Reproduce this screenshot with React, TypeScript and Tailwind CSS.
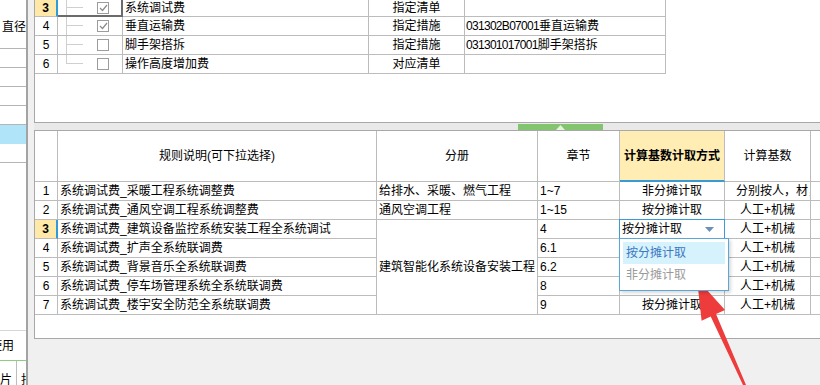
const line = 'border-[#bcbcbc]';

type TopRow = { n: string; checked: boolean; name: string; type: string; code: string; codeName: string };

const topRows: TopRow[] = [
  { n: '3', checked: true, name: '系统调试费', type: '指定清单', code: '', codeName: '' },
  { n: '4', checked: true, name: '垂直运输费', type: '指定措施', code: '031302B07001', codeName: '垂直运输费' },
  { n: '5', checked: false, name: '脚手架搭拆', type: '指定措施', code: '031301017001', codeName: '脚手架搭拆' },
  { n: '6', checked: false, name: '操作高度增加费', type: '对应清单', code: '', codeName: '' },
];

type RuleRow = { rule: string; book?: string; chapter: string; mode: string; base: string };

// rows 4 and 5 sit under the open dropdown, so their mode text is not drawn
const ruleRows: RuleRow[] = [
  { rule: '系统调试费_采暖工程系统调整费', book: '给排水、采暖、燃气工程', chapter: '1~7', mode: '非分摊计取', base: '分别按人，材，机' },
  { rule: '系统调试费_通风空调工程系统调整费', book: '通风空调工程', chapter: '1~15', mode: '按分摊计取', base: '人工+机械' },
  { rule: '系统调试费_建筑设备监控系统安装工程全系统调试', book: '建筑智能化系统设备安装工程', chapter: '4', mode: '按分摊计取', base: '人工+机械' },
  { rule: '系统调试费_扩声全系统联调费', chapter: '6.1', mode: '', base: '人工+机械' },
  { rule: '系统调试费_背景音乐全系统联调费', chapter: '6.2', mode: '', base: '人工+机械' },
  { rule: '系统调试费_停车场管理系统全系统联调费', chapter: '8', mode: '按分摊计取', base: '人工+机械' },
  { rule: '系统调试费_楼宇安全防范全系统联调费', chapter: '9', mode: '按分摊计取', base: '人工+机械' },
];

function Check() {
  return (
    <svg width="9" height="8" viewBox="0 0 9 8">
      <path d="M1 4 L3.5 6.5 L8 1" fill="none" stroke="#8a8a8a" strokeWidth="1.2" />
    </svg>
  );
}

function TopRowView({ row, i }: { row: TopRow; i: number }) {
  const first = i === 0;
  const last = i === topRows.length - 1;
  return (
    <div className={`flex ${first ? 'h-[17px]' : 'h-[19px]'}`}>
      <div
        className={`w-[23px] shrink-0 border-b ${line} flex items-center justify-center ${
          first ? 'bg-[#ffe9a8] font-bold border-r-2 border-r-[#2f9bd8]' : 'border-r'
        }`}
      >
        {row.n}
      </div>
      <div
        className={`w-[65px] shrink-0 flex items-stretch ${
          first ? 'border-r-2 border-b-2 border-[#6b6b6b]' : `border-r border-b ${line}`
        }`}
      >
        <div className="ml-[8px] w-[17px] flex flex-col">
          <div className="h-1/2 border-l border-b border-[#cfcfcf]" />
          <div className={`flex-1 ${last ? '' : 'border-l border-[#cfcfcf]'}`} />
        </div>
        <div className="ml-[14px] self-center w-[12px] h-[12px] border border-[#9c9c9c] bg-white flex items-center justify-center">
          {row.checked && <Check />}
        </div>
      </div>
      <div className={`w-[246px] shrink-0 border-r border-b ${line} flex items-center pl-[2px]`}>{row.name}</div>
      <div className={`w-[96px] shrink-0 border-r border-b ${line} flex items-center justify-center`}>{row.type}</div>
      <div className={`w-[201px] shrink-0 border-r border-b ${line} flex items-center pl-[1px] whitespace-nowrap`}>
        <span className="tracking-[-0.7px]">{row.code}</span>
        {row.codeName}
      </div>
    </div>
  );
}

function DropdownEditor({ value }: { value: string }) {
  return (
    <div className={`relative border-r border-b ${line} flex items-center pl-[2px]`}>
      <div className="absolute -inset-px border border-[#3c9ad6] pointer-events-none" />
      <span>{value}</span>
      <svg className="ml-auto mr-[10px]" width="9" height="5" viewBox="0 0 9 5">
        <path d="M0 0 H9 L4.5 5 Z" fill="#6a90b4" />
      </svg>
      <div className="absolute left-[-1px] top-[18px] z-10 w-[110px] h-[53px] bg-white border border-[#5aa7d8] shadow-[2px_2px_3px_rgba(0,0,0,0.15)] flex flex-col">
        <div className="mx-[3px] mt-[3px] h-[22px] bg-[#d6f2fc] text-[#3a78c2] pl-[3px] flex items-center">按分摊计取</div>
        <div className="mx-[3px] h-[22px] text-[#9a9a9a] pl-[3px] flex items-center">非分摊计取</div>
      </div>
    </div>
  );
}

function RuleTable() {
  const cell = `border-r border-b ${line} flex items-center whitespace-nowrap overflow-hidden`;
  return (
    <div className="grid grid-cols-[23px_319px_161px_82px_105px_86px_60px] grid-rows-[51px_repeat(7,19px)]">
      <div className={cell} />
      <div className={`${cell} justify-center`}>规则说明(可下拉选择)</div>
      <div className={`${cell} justify-center`}>分册</div>
      <div className={`${cell} justify-center`}>章节</div>
      <div className="border-r border-[#bcbcbc] border-b-2 border-b-[#3a9ad6] bg-[#ffedb3] flex items-center justify-center font-bold whitespace-nowrap">
        计算基数计取方式
      </div>
      <div className={`${cell} justify-center`}>计算基数</div>
      <div className={cell} />

      {ruleRows.map((r, i) => {
        const current = i === 2;
        return [
          <div
            key={`n${i}`}
            className={`border-b ${line} flex items-center justify-center ${
              current ? 'bg-[#ffe9a8] font-bold border-r-2 border-r-[#2f9bd8]' : 'border-r'
            }`}
          >
            {i + 1}
          </div>,
          <div key={`r${i}`} className={`${cell} pl-[2px]`}>
            {r.rule}
          </div>,
          r.book && (
            <div key={`b${i}`} className={`${cell} pl-[2px] ${current ? 'row-span-5' : ''}`}>
              {r.book}
            </div>
          ),
          <div key={`c${i}`} className={`${cell} pl-[2px]`}>
            {r.chapter}
          </div>,
          current ? (
            <DropdownEditor key={`m${i}`} value={r.mode} />
          ) : (
            <div key={`m${i}`} className={`${cell} justify-center`}>
              {r.mode}
            </div>
          ),
          <div key={`s${i}`} className={`${cell} ${i === 0 ? 'pl-[11px]' : 'justify-center'}`}>
            {r.base}
          </div>,
          <div key={`e${i}`} className={cell} />,
        ];
      })}
    </div>
  );
}

function LeftPanel() {
  return (
    <div className="w-[28px] shrink-0 bg-white border-r-2 border-[#a3a3a3] flex flex-col overflow-hidden">
      <div className="h-[49px] shrink-0 border-b border-[#b5b5b5] flex items-center pt-[5px] pl-[2px] whitespace-nowrap">直径</div>
      {[0, 1, 2, 3].map((k) => (
        <div key={k} className="h-[19px] shrink-0 border-b border-[#b5b5b5]" />
      ))}
      <div className="h-[19px] shrink-0 bg-[#b0e4f8]" />
      <div className="h-[19px] shrink-0 border-b border-[#b5b5b5]" />
      <div className="flex-1" />
      <div className="h-[31px] shrink-0 border-t border-[#d6d6d6] border-b border-b-[#8ccf79] flex items-center whitespace-nowrap">
        <span className="-ml-[10px]">使用</span>
      </div>
      <div className="h-[24px] shrink-0 flex">
        <div className="w-[17px] border-r border-[#bdbdbd] flex justify-end pt-[12px] pr-[4px] overflow-hidden">片</div>
        <div className="flex-1 pl-[4px] pt-[12px] overflow-hidden">扣</div>
      </div>
    </div>
  );
}

export default function App() {
  return (
    <div className="relative flex w-[820px] h-[385px] overflow-hidden bg-[#f0f0f0] text-[12px] leading-[14px] text-black font-['Liberation_Sans','Noto_Sans_CJK_SC',sans-serif]">
      <LeftPanel />
      <div className="w-[6px] shrink-0" />
      <div className="flex-1 flex flex-col min-w-0">
        <div className="h-[123px] shrink-0 bg-white border-l border-b border-[#a8a8a8] overflow-hidden">
          {topRows.map((r, i) => (
            <TopRowView key={r.n} row={r} i={i} />
          ))}
        </div>
        <div className="h-[7px] shrink-0 bg-[#e9e9e9] flex">
          <div className="w-[484px] shrink-0" />
          <div className="w-[85px] mt-[1px] bg-[#82c56e] flex items-center justify-center">
            <svg width="9" height="5" viewBox="0 0 9 5">
              <path d="M0 5 L4.5 0 L9 5 Z" fill="#e6f4dc" />
            </svg>
          </div>
        </div>
        <div className="h-[209px] shrink-0 bg-white border-l border-t border-b border-[#a8a8a8] overflow-hidden">
          <RuleTable />
        </div>
      </div>
      <svg className="absolute inset-0 pointer-events-none" width="820" height="385" viewBox="0 0 820 385">
        <polygon points="697,279 725,310 716,314 746,385 743,385 710.7,316.6 701.6,320.7" fill="#ee3b3b" />
      </svg>
    </div>
  );
}
